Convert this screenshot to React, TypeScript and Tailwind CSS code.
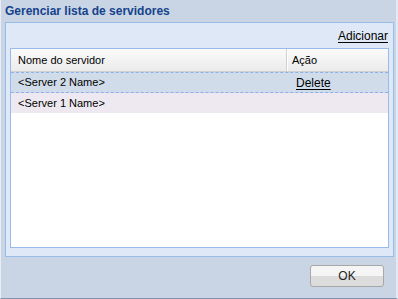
export default function App() {
  return (
    <div
      className="flex h-[299px] w-[398px] flex-col border-b border-l border-r-2 border-b-[#7f93ad] border-l-[#e9eef6] border-r-[#e3eaf3] bg-[#c9d5e5] text-black"
      style={{ fontFamily: '"Liberation Sans", Arial, sans-serif' }}
    >
      <div className="h-[22px] pl-[4px] pt-[4px] text-[12px] font-bold leading-[14px] text-[#15428b]">
        Gerenciar lista de servidores
      </div>
      <div className="ml-[4px] mr-[2px] flex h-[235px] flex-col border border-[#99bbe8] bg-[#dfe8f6]">
        <div className="flex h-[25px] items-center justify-end pr-[5px] pt-[1px]">
          <a className="cursor-pointer text-[12px] leading-[14px] underline underline-offset-2">Adicionar</a>
        </div>
        <div className="mx-[4px] mb-[8px] flex-1 border border-[#99bbe8] bg-white">
          <div className="flex h-[23px] border-b border-[#d0d0d0] bg-gradient-to-b from-[#fafafa] to-[#ebebeb] text-[11px]">
            <div className="flex w-[276px] items-center border-r border-[#d0d0d0] pl-[7px]">
              Nome do servidor
            </div>
            <div className="flex flex-1 items-center border-l border-white pl-[4px]">Ação</div>
          </div>
          <div className="flex h-[21px] border-y border-dashed border-[#8fb0e4] bg-[#d0dcea] text-[11px]">
            <div className="flex w-[278px] items-center pl-[7px]">&lt;Server 2 Name&gt;</div>
            <div className="flex flex-1 items-center pl-[7px]">
              <a className="cursor-pointer text-[12px] underline underline-offset-2">Delete</a>
            </div>
          </div>
          <div className="flex h-[20px] items-center bg-[#eee9f0] pl-[7px] text-[11px]">
            &lt;Server 1 Name&gt;
          </div>
        </div>
      </div>
      <div className="flex flex-1 items-start justify-end pr-[12px] pt-[8px]">
        <button className="flex h-[22px] w-[74px] items-center justify-center rounded-[3px] border border-[#a8a8a8] bg-[linear-gradient(#f5f5f5_50%,#dcdcdc_50%)] text-[12px] font-normal leading-none text-[#222]">
          OK
        </button>
      </div>
    </div>
  );
}
